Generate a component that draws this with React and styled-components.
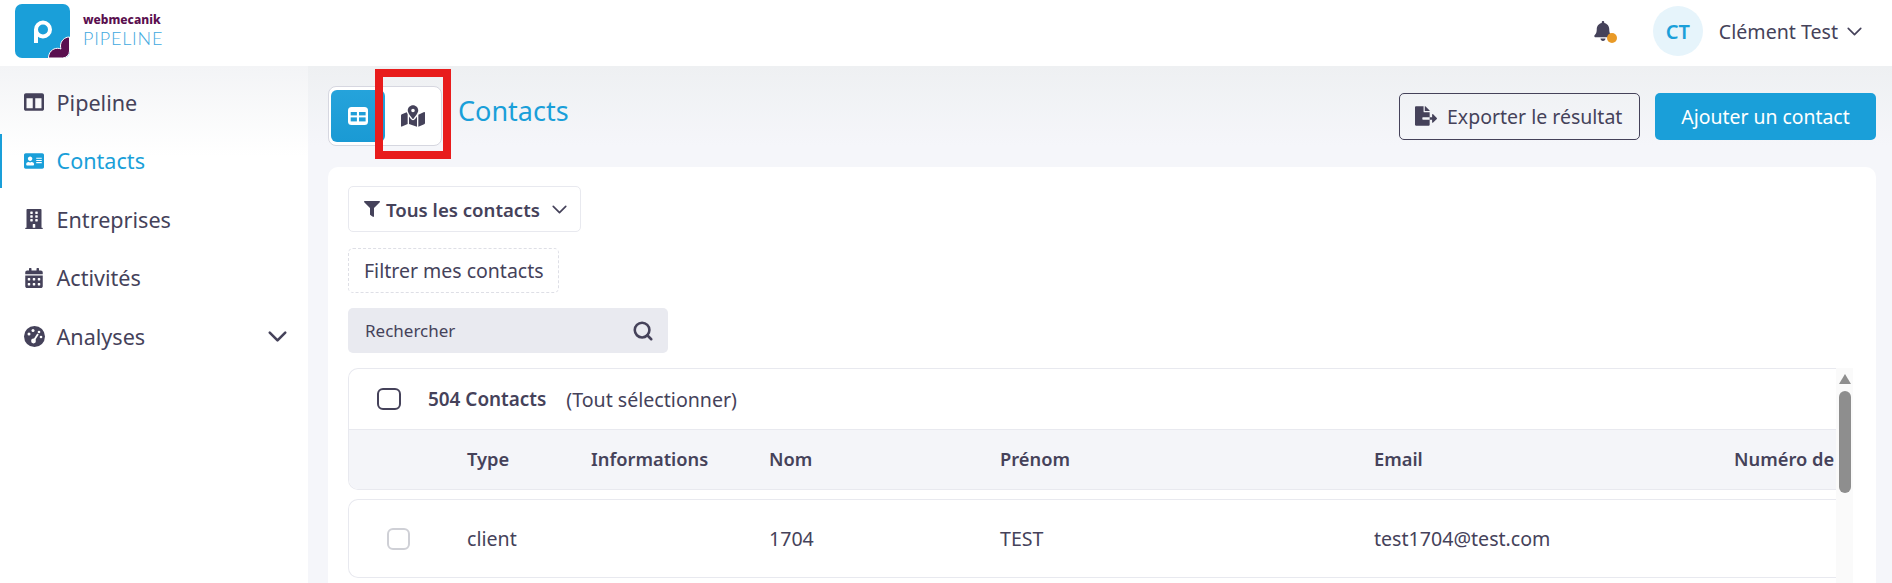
import React from "react";
import styled, { createGlobalStyle } from "styled-components";
import {
  FaAddressCard,
  FaBell,
  FaBuilding,
  FaCalendarAlt,
  FaColumns,
  FaFileExport,
  FaFilter,
  FaMapMarkedAlt,
} from "react-icons/fa";
import { FiChevronDown, FiSearch } from "react-icons/fi";

const COLUMNS = "118px 124px 178px 231px 374px 360px 102px";

const GlobalStyle = createGlobalStyle`
  html, body {
    margin: 0;
    height: 583px;
    overflow: hidden;
    background: #f5f6fa;
    font-family: "Noto Sans", "Open Sans", sans-serif;
    color: #45425a;
  }
  * { box-sizing: border-box; }
`;

const Logo = () => (
  <svg width="55" height="54" viewBox="0 0 55 54">
    <rect width="55" height="54" rx="7" fill="#1a9fd9" />
    <path
      d="M54.5 33c-5 0-9 4-9 9 0 1 .2 2 .4 3-1-.5-2-.7-3.4-.7-5 0-9 4-9 9.7h14a7 7 0 0 0 7-7z"
      fill="#5a0f4f"
      stroke="#fff"
      strokeWidth="1"
    />
    <circle cx="28" cy="25.5" r="7" fill="none" stroke="#fff" strokeWidth="4" />
    <path d="M21 25v14" fill="none" stroke="#fff" strokeWidth="4" />
  </svg>
);

const GaugeIcon = () => (
  <svg width="21" height="21" viewBox="0 0 21 21">
    <circle cx="10.5" cy="10.5" r="10.5" fill="currentColor" />
    <g fill="#fff">
      <circle cx="5" cy="8" r="1.5" />
      <circle cx="9" cy="4.5" r="1.5" />
      <circle cx="15" cy="6" r="1.3" />
      <circle cx="17" cy="11" r="1.3" />
      <circle cx="9.5" cy="15" r="2.4" />
    </g>
    <path d="M9.5 15 14 8" stroke="#fff" strokeWidth="1.8" />
  </svg>
);

const TableIcon = () => (
  <svg width="20" height="18" viewBox="0 0 20 18">
    <rect width="20" height="18" rx="3.5" fill="#fff" />
    <g fill="#1f9ed8">
      <rect x="2.7" y="5" width="6.2" height="3.4" />
      <rect x="11" y="5" width="6.6" height="3.4" />
      <rect x="2.7" y="10.4" width="6.2" height="4" />
      <rect x="11" y="10.4" width="6.6" height="4" />
    </g>
  </svg>
);

const NAV_ITEMS = [
  { label: "Pipeline", icon: FaColumns },
  { label: "Contacts", icon: FaAddressCard, active: true },
  { label: "Entreprises", icon: FaBuilding },
  { label: "Activités", icon: FaCalendarAlt },
  { label: "Analyses", icon: GaugeIcon, expandable: true },
];

const HEADINGS = ["", "Type", "Informations", "Nom", "Prénom", "Email", "Numéro de"];
const ROW = ["client", "", "1704", "TEST", "test1704@test.com", ""];

export default function App() {
  return (
    <Page>
      <GlobalStyle />
      <Header>
        <Brand>
          <Logo />
          <BrandText>
            <BrandMaker>webmecanik</BrandMaker>
            <BrandName>PIPELINE</BrandName>
          </BrandText>
        </Brand>
        <UserArea>
          <BellWrap>
            <FaBell size={20} />
            <BellDot />
          </BellWrap>
          <Avatar>CT</Avatar>
          <UserName>Clément Test</UserName>
          <FiChevronDown size={25} strokeWidth={1.6} />
        </UserArea>
      </Header>

      <Body>
        <Sidebar>
          {NAV_ITEMS.map(({ label, icon: Icon, active, expandable }) => (
            <NavItem key={label} $active={active}>
              <NavIcon>
                <Icon />
              </NavIcon>
              <span>{label}</span>
              {expandable && (
                <NavChevron>
                  <FiChevronDown size={31} strokeWidth={2} />
                </NavChevron>
              )}
            </NavItem>
          ))}
        </Sidebar>

        <Main>
          <TopBar>
            <ViewToggle>
              <ToggleButton $active>
                <TableIcon />
              </ToggleButton>
              <ToggleButton>
                <FaMapMarkedAlt size={24} />
              </ToggleButton>
              <Highlight />
            </ViewToggle>
            <Title>Contacts</Title>
            <Actions>
              <OutlineButton>
                <FaFileExport size={22} />
                Exporter le résultat
              </OutlineButton>
              <PrimaryButton>Ajouter un contact</PrimaryButton>
            </Actions>
          </TopBar>

          <Card>
            <FilterButton>
              <FaFilter size={16} />
              <strong>Tous les contacts</strong>
              <FiChevronDown size={25} strokeWidth={1.6} />
            </FilterButton>
            <DashedButton>Filtrer mes contacts</DashedButton>
            <Search>
              Rechercher
              <FiSearch size={22} strokeWidth={2.8} />
            </Search>

            <ListArea>
              <TableArea>
                <TableHead>
                  <CountRow>
                    <HeadCheck />
                    <CountLabel>504 Contacts</CountLabel>
                    <span>(Tout sélectionner)</span>
                  </CountRow>
                  <ColumnRow>
                    {HEADINGS.map((heading) => (
                      <span key={heading}>{heading}</span>
                    ))}
                  </ColumnRow>
                </TableHead>
                <DataRow>
                  <RowCheck />
                  {ROW.map((value, index) => (
                    <span key={index}>{value}</span>
                  ))}
                </DataRow>
              </TableArea>
              <Scrollbar>
                <ScrollArrow />
                <ScrollThumb />
              </Scrollbar>
            </ListArea>
          </Card>
        </Main>
      </Body>
    </Page>
  );
}

const Page = styled.div`
  display: flex;
  flex-direction: column;
  width: 1892px;
  height: 583px;
  overflow: hidden;
`;

const Header = styled.header`
  flex: none;
  display: flex;
  align-items: center;
  justify-content: space-between;
  height: 66px;
  padding: 0 25px 4px 15px;
  background: #fff;
`;

const Brand = styled.div`
  display: flex;
  align-items: center;
  gap: 13px;
`;

const BrandText = styled.div`
  display: flex;
  flex-direction: column;
  gap: 1px;
  margin-bottom: 2px;
`;

const BrandMaker = styled.span`
  font-size: 12px;
  line-height: 14px;
  font-weight: 800;
  color: #5a0f4f;
`;

const BrandName = styled.span`
  font-family: "Lato", sans-serif;
  font-size: 18px;
  line-height: 20px;
  font-weight: 300;
  color: #3fa9e0;
  letter-spacing: 0.8px;
`;

const UserArea = styled.div`
  display: flex;
  align-items: center;
`;

const BellWrap = styled.div`
  position: relative;
  display: flex;
  width: 24px;
  margin-right: 36px;
`;

const BellDot = styled.span`
  position: absolute;
  right: 0;
  bottom: -2px;
  width: 10px;
  height: 10px;
  border-radius: 50%;
  background: #e99a27;
`;

const Avatar = styled.div`
  display: flex;
  align-items: center;
  justify-content: center;
  width: 50px;
  height: 50px;
  border-radius: 50%;
  background: #e6f4fb;
  color: #1a9fd9;
  font-size: 20px;
  font-weight: 600;
`;

const UserName = styled.span`
  margin: 0 4px 0 16px;
  font-size: 19.6px;
`;

const Body = styled.div`
  flex: 1;
  display: flex;
  min-height: 0;
`;

const Sidebar = styled.nav`
  flex: none;
  display: flex;
  flex-direction: column;
  gap: 4.6px;
  width: 308px;
  padding-top: 9px;
  background: linear-gradient(#f3f4f6 0, #fff 90px);
`;

const NavItem = styled.div`
  display: flex;
  align-items: center;
  height: 54px;
  padding-left: ${(p) => (p.$active ? "21px" : "23px")};
  border-left: ${(p) => (p.$active ? "2px solid #1a9fd9" : "none")};
  font-size: 21.6px;
  color: ${(p) => (p.$active ? "#1a9fd9" : "#45425a")};
`;

const NavIcon = styled.span`
  display: flex;
  justify-content: center;
  width: 22px;
  margin-right: 11.5px;
  font-size: 20px;
`;

const NavChevron = styled.span`
  display: flex;
  margin-left: auto;
  margin-right: 15px;
`;

const Main = styled.main`
  flex: 1;
  display: flex;
  flex-direction: column;
  gap: 21px;
  min-width: 0;
  padding: 20px 16px 0 20px;
  background: linear-gradient(#eef0f2 0, #f5f6fa 80px);
`;

const TopBar = styled.div`
  flex: none;
  display: flex;
  align-items: center;
  height: 60px;
`;

const ViewToggle = styled.div`
  position: relative;
  display: flex;
  width: 114px;
  height: 60px;
  padding: 3px 0 3px 2px;
  border: 1px solid #d6d7e0;
  border-radius: 8px;
  background: #fff;
`;

const ToggleButton = styled.div`
  display: flex;
  align-items: center;
  justify-content: center;
  flex: ${(p) => (p.$active ? "0 0 54px" : "1")};
  border-radius: 6px;
  background: ${(p) => (p.$active ? "linear-gradient(#25a3db, #1a9ad4)" : "#fff")};
  color: ${(p) => (p.$active ? "#fff" : "#45425a")};
`;

const Highlight = styled.div`
  position: absolute;
  top: -18px;
  left: 46px;
  width: 76px;
  height: 90px;
  border: 8px solid #e81c1c;
`;

const Title = styled.h1`
  margin: 0 0 12px 16px;
  font-size: 27px;
  font-weight: 400;
  color: #1a9fd9;
`;

const Actions = styled.div`
  display: flex;
  gap: 15px;
  margin-left: auto;
`;

const OutlineButton = styled.div`
  display: flex;
  align-items: center;
  gap: 10px;
  width: 241px;
  height: 47px;
  padding-left: 15px;
  border: 1px solid #45425a;
  border-radius: 5px;
  font-size: 19.5px;
  white-space: nowrap;
`;

const PrimaryButton = styled.div`
  display: flex;
  align-items: center;
  justify-content: center;
  width: 221px;
  height: 47px;
  border-radius: 5px;
  background: #1a9fd9;
  color: #fff;
  font-size: 19.4px;
`;

const Card = styled.section`
  flex: 1;
  display: flex;
  flex-direction: column;
  align-items: flex-start;
  min-height: 0;
  padding: 19px 23px 0 20px;
  border-radius: 10px 10px 0 0;
  background: #fff;
`;

const FilterButton = styled.div`
  display: flex;
  align-items: center;
  width: 233px;
  height: 46px;
  padding-left: 15px;
  gap: 7px;
  border: 1px solid #e8e9ef;
  border-radius: 5px;
  font-size: 18.6px;
  strong {
    font-weight: 600;
  }
  svg:first-child {
    margin-right: -1px;
  }
`;

const DashedButton = styled.div`
  display: flex;
  align-items: center;
  width: 211px;
  height: 45px;
  margin-top: 16px;
  padding-left: 15px;
  border: 1px dashed #dedfe6;
  border-radius: 5px;
  font-size: 19.5px;
`;

const Search = styled.div`
  display: flex;
  align-items: center;
  justify-content: space-between;
  width: 320px;
  height: 45px;
  margin-top: 15px;
  padding: 0 14px 0 17px;
  border-radius: 5px;
  background: #e9eaf0;
  font-size: 17px;
`;

const ListArea = styled.div`
  flex: 1;
  display: flex;
  align-self: stretch;
  min-height: 0;
  margin-top: 15px;
`;

const TableArea = styled.div`
  flex: 1;
  min-width: 0;
  overflow: hidden;
  font-size: 19.6px;
`;

const TableHead = styled.div`
  border: 1px solid #e8e9ef;
  border-right: none;
  border-radius: 10px 0 0 10px;
  overflow: hidden;
`;

const CountRow = styled.div`
  display: flex;
  align-items: center;
  height: 61px;
  padding-left: 28px;
  border-bottom: 1px solid #e8e9ef;
`;

const HeadCheck = styled.span`
  width: 24px;
  height: 22px;
  margin-right: 27px;
  border: 2px solid #45425a;
  border-radius: 6px;
`;

const CountLabel = styled.strong`
  margin-right: 20px;
  font-size: 18.9px;
  font-weight: 600;
`;

const ColumnRow = styled.div`
  display: grid;
  grid-template-columns: ${COLUMNS};
  align-items: center;
  height: 59px;
  padding-bottom: 2px;
  background: #f4f5f9;
  font-size: 18.3px;
  font-weight: 600;
  white-space: nowrap;
`;

const DataRow = styled.div`
  display: grid;
  grid-template-columns: ${COLUMNS};
  align-items: center;
  height: 79px;
  margin-top: 9px;
  border: 1px solid #e8e9ef;
  border-right: none;
  border-radius: 10px 0 0 10px;
  white-space: nowrap;
`;

const RowCheck = styled.span`
  width: 23px;
  height: 22px;
  margin-left: 38px;
  border: 2px solid #cfd0d6;
  border-radius: 6px;
`;

const Scrollbar = styled.div`
  flex: none;
  display: flex;
  flex-direction: column;
  align-items: center;
  width: 17px;
  padding-top: 6px;
  background: #fafafa;
`;

const ScrollArrow = styled.span`
  width: 0;
  height: 0;
  border-left: 6px solid transparent;
  border-right: 6px solid transparent;
  border-bottom: 10px solid #8e8e8e;
`;

const ScrollThumb = styled.span`
  width: 12px;
  height: 102px;
  margin-top: 7px;
  border-radius: 6px;
  background: #8e8e8e;
`;
